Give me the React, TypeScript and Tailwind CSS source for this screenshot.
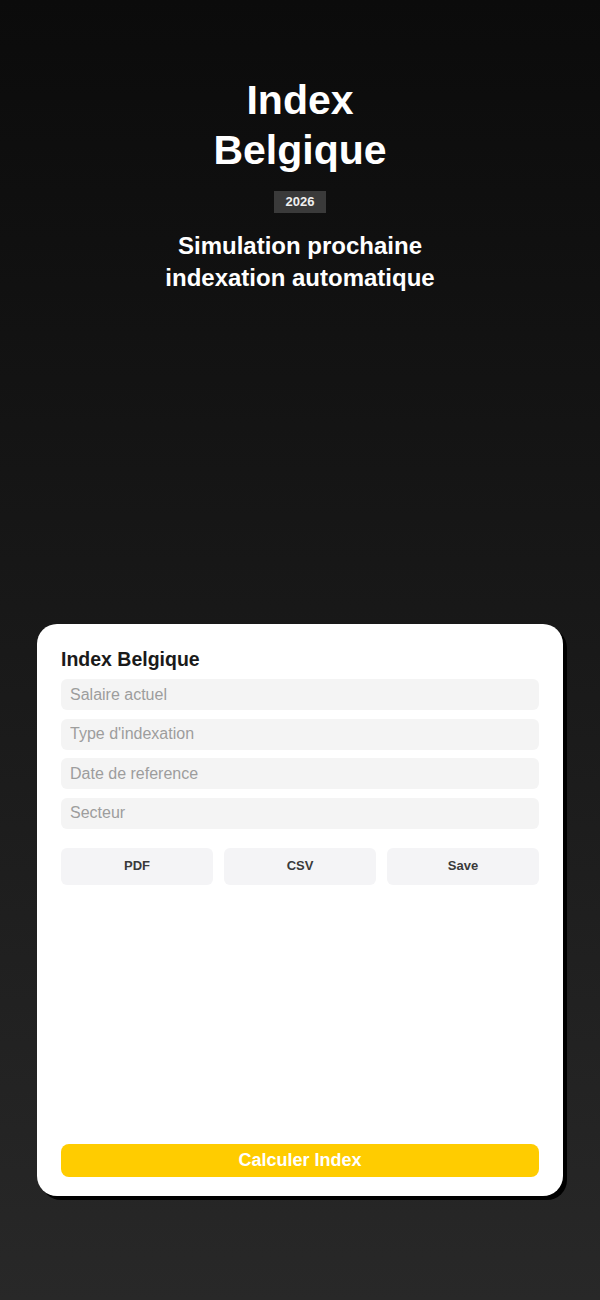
import React from "react";

const App: React.FC = () => {
  const fields = ["Salaire actuel", "Type d'indexation", "Date de reference", "Secteur"];
  const actions = ["PDF", "CSV", "Save"];

  return (
    <div
      className="min-h-[1300px] w-full bg-gradient-to-b from-[#0b0b0b] to-[#282828] flex flex-col items-center"
      style={{ fontFamily: '"Liberation Sans", Arial, sans-serif' }}
    >
      {/* Header */}
      <div className="pt-[75px] flex flex-col items-center text-center text-white">
        <h1 className="max-w-[290px] text-[41px] leading-[50px] font-bold">Index Belgique</h1>
        <span className="mt-4 bg-[#3a3a3a] px-[12px] h-[22px] flex items-center text-[13px] font-bold text-[#f0f0f0]">
          2026
        </span>
        <p className="mt-[17px] max-w-[300px] text-[24px] leading-8 font-bold">
          Simulation prochaine indexation automatique
        </p>
      </div>

      {/* Card */}
      <div className="mt-[330px] w-[526px] h-[572px] bg-white rounded-[20px] shadow-[4px_4px_0_#000] px-6 pt-[21px] pb-[19px] flex flex-col">
        <h2 className="text-[19.5px] leading-7 font-bold text-[#1a1a1a]">Index Belgique</h2>
        <div className="mt-[6px] flex flex-col gap-[8.5px]">
          {fields.map((f) => (
            <input
              key={f}
              placeholder={f}
              className="h-[31px] w-full rounded-md bg-[#f4f4f4] pl-[9px] text-[16px] text-[#333] placeholder:text-[#9d9d9d] outline-none"
            />
          ))}
        </div>
        <div className="mt-[19px] grid grid-cols-3 gap-[11px]">
          {actions.map((a) => (
            <button
              key={a}
              className="h-[37px] rounded-md bg-[#f4f4f6] text-[13px] font-bold text-[#3a3a3a]"
            >
              {a}
            </button>
          ))}
        </div>
        <div className="flex-1" />
        <button className="h-[33px] w-full rounded-lg bg-[#ffcc00] text-[18px] font-bold text-white">
          Calculer Index
        </button>
      </div>
    </div>
  );
};

export default App;
